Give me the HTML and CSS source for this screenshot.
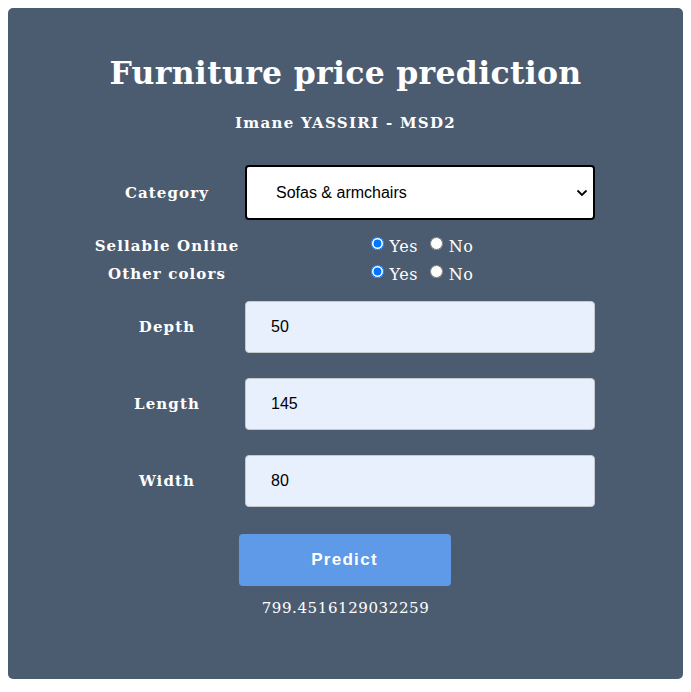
FILE: index.html
```html
<!DOCTYPE html>
<html lang="en">
<head>
<meta charset="utf-8">
<title>Furniture price prediction</title>
<link rel="stylesheet" href="styles.css">
</head>
<body>
<div class="card">
  <h1 class="title">Furniture price prediction</h1>
  <h3 class="author">Imane YASSIRI - MSD2</h3>
  <form class="form">
    <div class="row row-select">
      <label class="label">Category</label>
      <div class="select-wrap">
        <select class="select">
          <option>Sofas &amp; armchairs</option>
        </select>
        <svg class="chevron" width="12" height="8" viewBox="0 0 12 8"><path d="M1.5 1.5 L6 6 L10.5 1.5" fill="none" stroke="#000" stroke-width="1.8"/></svg>
      </div>
    </div>
    <div class="row row-radio first-radio">
      <label class="label">Sellable Online</label>
      <div class="radios">
        <label class="opt"><input type="radio" name="sell" checked>Yes</label>
        <label class="opt"><input type="radio" name="sell">No</label>
      </div>
    </div>
    <div class="row row-radio">
      <label class="label">Other colors</label>
      <div class="radios">
        <label class="opt"><input type="radio" name="other" checked>Yes</label>
        <label class="opt"><input type="radio" name="other">No</label>
      </div>
    </div>
    <div class="row row-input first-input">
      <label class="label">Depth</label>
      <input class="field" type="text" value="50">
    </div>
    <div class="row row-input">
      <label class="label">Length</label>
      <input class="field" type="text" value="145">
    </div>
    <div class="row row-input">
      <label class="label">Width</label>
      <input class="field" type="text" value="80">
    </div>
    <button class="btn" type="button">Predict</button>
  </form>
  <p class="result">799.4516129032259</p>
</div>
</body>
</html>
```
FILE: styles.css
```css
html, body {
  margin: 0;
  padding: 0;
  background: #ffffff;
}
body {
  padding: 8px;
  font-family: "DejaVu Serif", "Liberation Serif", serif;
  color: #ffffff;
}
.card {
  background: #4b5c70;
  border-radius: 5px;
  height: 671px;
  box-sizing: border-box;
  padding-top: 46px;
  display: flex;
  flex-direction: column;
  align-items: center;
}
.title {
  margin: 0;
  font-size: 31.5px;
  font-weight: bold;
  line-height: 38px;
  letter-spacing: 0.3px;
}
.author {
  margin: 21px 0 0;
  font-size: 15px;
  font-weight: bold;
  line-height: 20px;
  letter-spacing: 1.3px;
}
.form {
  margin-top: 32px;
  display: flex;
  flex-direction: column;
  align-items: center;
}
.row {
  display: grid;
  grid-template-columns: 142px 350px;
  column-gap: 7px;
  align-items: center;
}
.label {
  display: flex;
  justify-content: center;
  white-space: nowrap;
  font-size: 15px;
  font-weight: bold;
  letter-spacing: 1.1px;
}
.select-wrap {
  position: relative;
  height: 55px;
}
.select {
  appearance: none;
  -webkit-appearance: none;
  width: 350px;
  height: 55px;
  box-sizing: border-box;
  border: 2px solid #000;
  border-radius: 4px;
  background: #fff;
  padding: 0 0 0 29px;
  font-family: "Liberation Sans", Arial, sans-serif;
  font-size: 16px;
  color: #000;
  outline: none;
}
.chevron {
  position: absolute;
  right: 7px;
  top: 24px;
}
.row-radio {
  height: 28px;
}
.first-radio {
  margin-top: 12px;
}
.radios {
  display: flex;
  justify-content: center;
  gap: 12px;
  padding-left: 4px;
}
.opt {
  display: flex;
  align-items: center;
  font-size: 16px;
  letter-spacing: 0.5px;
}
.opt input {
  margin: 0 6px 5px 0;
  width: 13px;
  height: 13px;
}
.row-input {
  margin-top: 25px;
}
.first-input {
  margin-top: 13px;
}
.field {
  width: 350px;
  height: 52px;
  box-sizing: border-box;
  border: 1px solid #c4c8cd;
  border-radius: 4px;
  background: #e8f0fe;
  padding: 0 0 0 25px;
  font-family: "Liberation Sans", Arial, sans-serif;
  font-size: 16px;
  color: #000;
}
.btn {
  margin-top: 27px;
  margin-left: -2px;
  width: 212px;
  height: 52px;
  border: none;
  border-radius: 4px;
  background: #5f9ae8;
  color: #fff;
  font-family: "Liberation Sans", Arial, sans-serif;
  font-size: 17px;
  font-weight: bold;
  letter-spacing: 1.3px;
}
.result {
  margin: 12px 0 0;
  font-size: 15px;
  line-height: 20px;
  letter-spacing: 0.6px;
}
```
